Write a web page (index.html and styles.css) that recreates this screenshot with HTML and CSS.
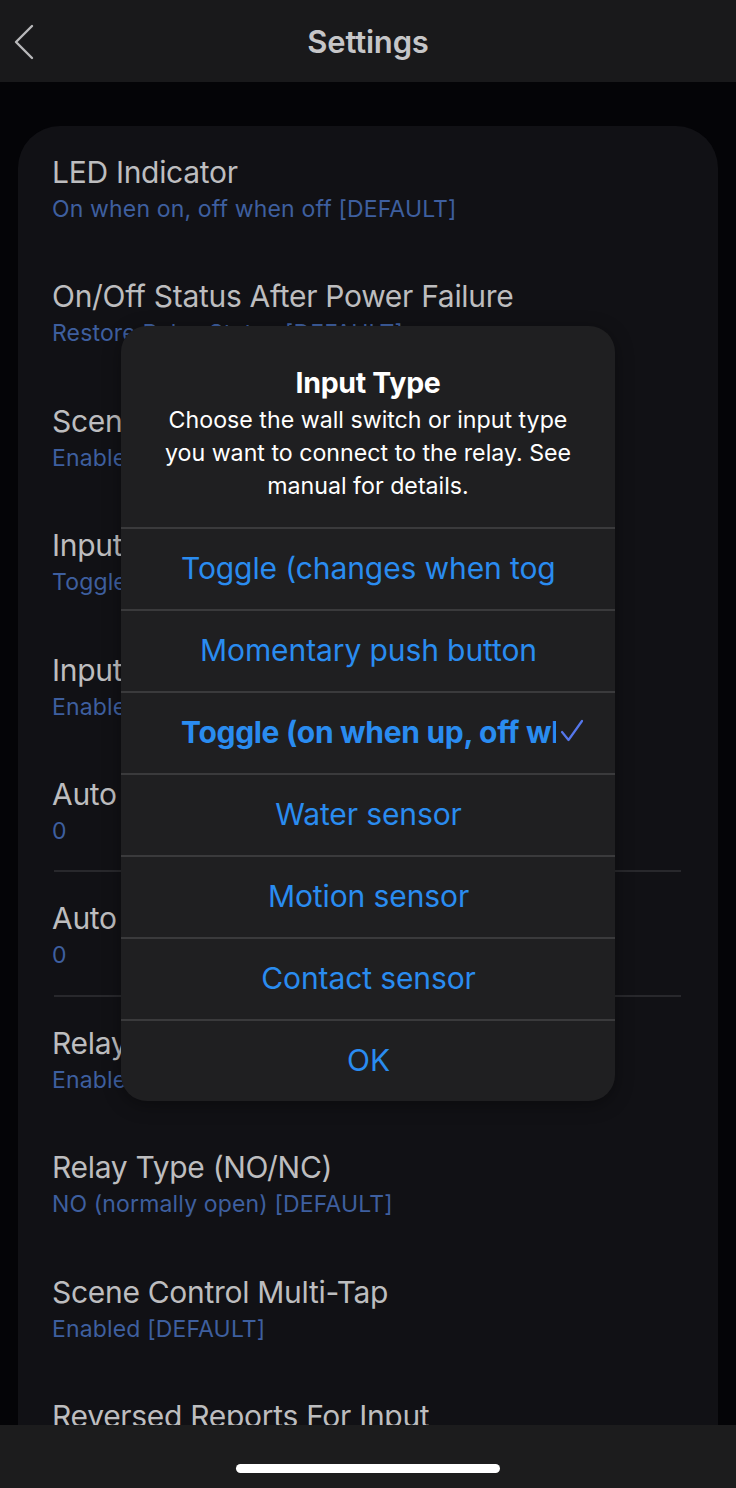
FILE: index.html
```html
<!DOCTYPE html>
<html lang="en">
<head>
<meta charset="utf-8">
<title>Settings</title>
<link rel="stylesheet" href="styles.css">
</head>
<body>
<div class="screen">
  <header class="topbar">
    <div class="back">
      <svg width="22" height="36" viewBox="0 0 22 36"><path d="M19 2 L3 18 L19 34" fill="none" stroke="#b9b9bb" stroke-width="2.4" stroke-linecap="round" stroke-linejoin="round"/></svg>
    </div>
    <h1 class="title">Settings</h1>
    <div></div>
  </header>
  <main class="content">
    <section class="card">
      <div class="item"><div class="item-title">LED Indicator</div><div class="item-value">On when on, off when off [DEFAULT]</div></div>
      <div class="item"><div class="item-title">On/Off Status After Power Failure</div><div class="item-value">Restore Relay Status [DEFAULT]</div></div>
      <div class="item"><div class="item-title">Scene Control</div><div class="item-value">Enabled [DEFAULT]</div></div>
      <div class="item"><div class="item-title">Input Type</div><div class="item-value">Toggle (on when up, off when down)</div></div>
      <div class="item"><div class="item-title">Input Trigger Mode</div><div class="item-value">Enabled [DEFAULT]</div></div>
      <div class="item sep"><div class="item-title">Auto Turn-Off Timer</div><div class="item-value">0</div></div>
      <div class="divider"></div>
      <div class="item sep"><div class="item-title">Auto Turn-On Timer</div><div class="item-value">0</div></div>
      <div class="divider"></div>
      <div class="item"><div class="item-title">Relay Control and Physical Input</div><div class="item-value">Enabled [DEFAULT]</div></div>
      <div class="item"><div class="item-title">Relay Type (NO/NC)</div><div class="item-value">NO (normally open) [DEFAULT]</div></div>
      <div class="item"><div class="item-title">Scene Control Multi-Tap</div><div class="item-value">Enabled [DEFAULT]</div></div>
      <div class="item"><div class="item-title">Reversed Reports For Input</div><div class="item-value">Disabled [DEFAULT]</div></div>
    </section>
  </main>
  <footer class="homebar"><div class="indicator"></div></footer>

  <div class="alert">
    <div class="alert-head">
      <div class="alert-title">Input Type</div>
      <div class="alert-msg">Choose the wall switch or input type you want to connect to the relay. See manual for details.</div>
    </div>
    <div class="action"><span class="label">Toggle (changes when toggled)</span></div>
    <div class="action"><span class="label">Momentary push button</span></div>
    <div class="action selected"><span class="label">Toggle (on when up, off when down)</span>
      <svg class="check" width="24" height="24" viewBox="0 0 24 24"><path d="M2 13 L8.5 21 L22 2" fill="none" stroke="#5577ec" stroke-width="2.2" stroke-linecap="round" stroke-linejoin="round"/></svg>
    </div>
    <div class="action"><span class="label">Water sensor</span></div>
    <div class="action"><span class="label">Motion sensor</span></div>
    <div class="action"><span class="label">Contact sensor</span></div>
    <div class="action"><span class="label">OK</span></div>
  </div>
</div>
</body>
</html>
```
FILE: styles.css
```css
* { box-sizing: border-box; }
html, body { margin: 0; padding: 0; }
body {
  background: #040407;
  font-family: Inter, Roboto, "Liberation Sans", sans-serif;
}
.screen {
  position: relative;
  width: 736px;
  height: 1488px;
  display: flex;
  flex-direction: column;
  overflow: hidden;
  background: #040407;
}
.topbar {
  height: 82px;
  flex: none;
  background: #19191b;
  display: grid;
  grid-template-columns: 80px 1fr 80px;
  align-items: center;
}
.back { padding-left: 13px; padding-top: 2px; display: flex; }
.title {
  margin: 0;
  text-align: center;
  font-size: 31px;
  font-weight: 600;
  color: #c6c6c8;
  letter-spacing: -0.2px;
}
.content {
  flex: 1;
  overflow: hidden;
  padding: 44px 18px 0;
}
.card {
  background: #111115;
  border-radius: 42px 42px 0 0;
  min-height: 100%;
}
.item {
  height: 124.4px;
  padding: 28px 34px 0;
}
.item.sep { height: 122.4px; }
.item-title {
  font-size: 30px;
  line-height: 36px;
  color: #bdbdbf;
  white-space: nowrap;
  letter-spacing: -0.3px;
}
.item-value {
  margin-top: 4px;
  font-size: 23px;
  line-height: 30px;
  color: #3e5f9f;
  white-space: nowrap;
  letter-spacing: 0.15px;
}
.divider {
  height: 2px;
  margin: 0 37px 0 36px;
  background: #28282c;
}
.homebar {
  height: 63px;
  flex: none;
  background: #1c1c1d;
  display: flex;
  justify-content: center;
  padding-top: 39px;
}
.indicator {
  width: 264px;
  height: 9px;
  border-radius: 5px;
  background: #ffffff;
}
.alert {
  position: absolute;
  left: 121px;
  top: 326px;
  width: 494px;
  background: #1f1f21;
  border-radius: 26px;
  overflow: hidden;
  box-shadow: 0 4px 18px rgba(0,0,0,0.35);
}
.alert-head {
  padding: 40px 35px 24px;
  text-align: center;
}
.alert-title {
  font-size: 28.5px;
  line-height: 34px;
  font-weight: 700;
  color: #ffffff;
  letter-spacing: -0.3px;
}
.alert-msg {
  margin-top: 4px;
  font-size: 23.2px;
  line-height: 33px;
  color: #ffffff;
  letter-spacing: 0;
}
.action {
  position: relative;
  height: 82px;
  border-top: 2px solid #3a3a3c;
  display: flex;
  align-items: center;
  padding: 0 59px 0 60px;
}
.label {
  display: block;
  width: 100%;
  overflow: hidden;
  white-space: nowrap;
  text-align: center;
  font-size: 30px;
  color: #2a8cf0;
  letter-spacing: -0.1px;
  margin-top: -3px;
}
.action.selected .label { font-weight: 700; padding-right: 2px; letter-spacing: -0.3px; }
.check {
  position: absolute;
  right: 31px;
  top: 26px;
}
```
